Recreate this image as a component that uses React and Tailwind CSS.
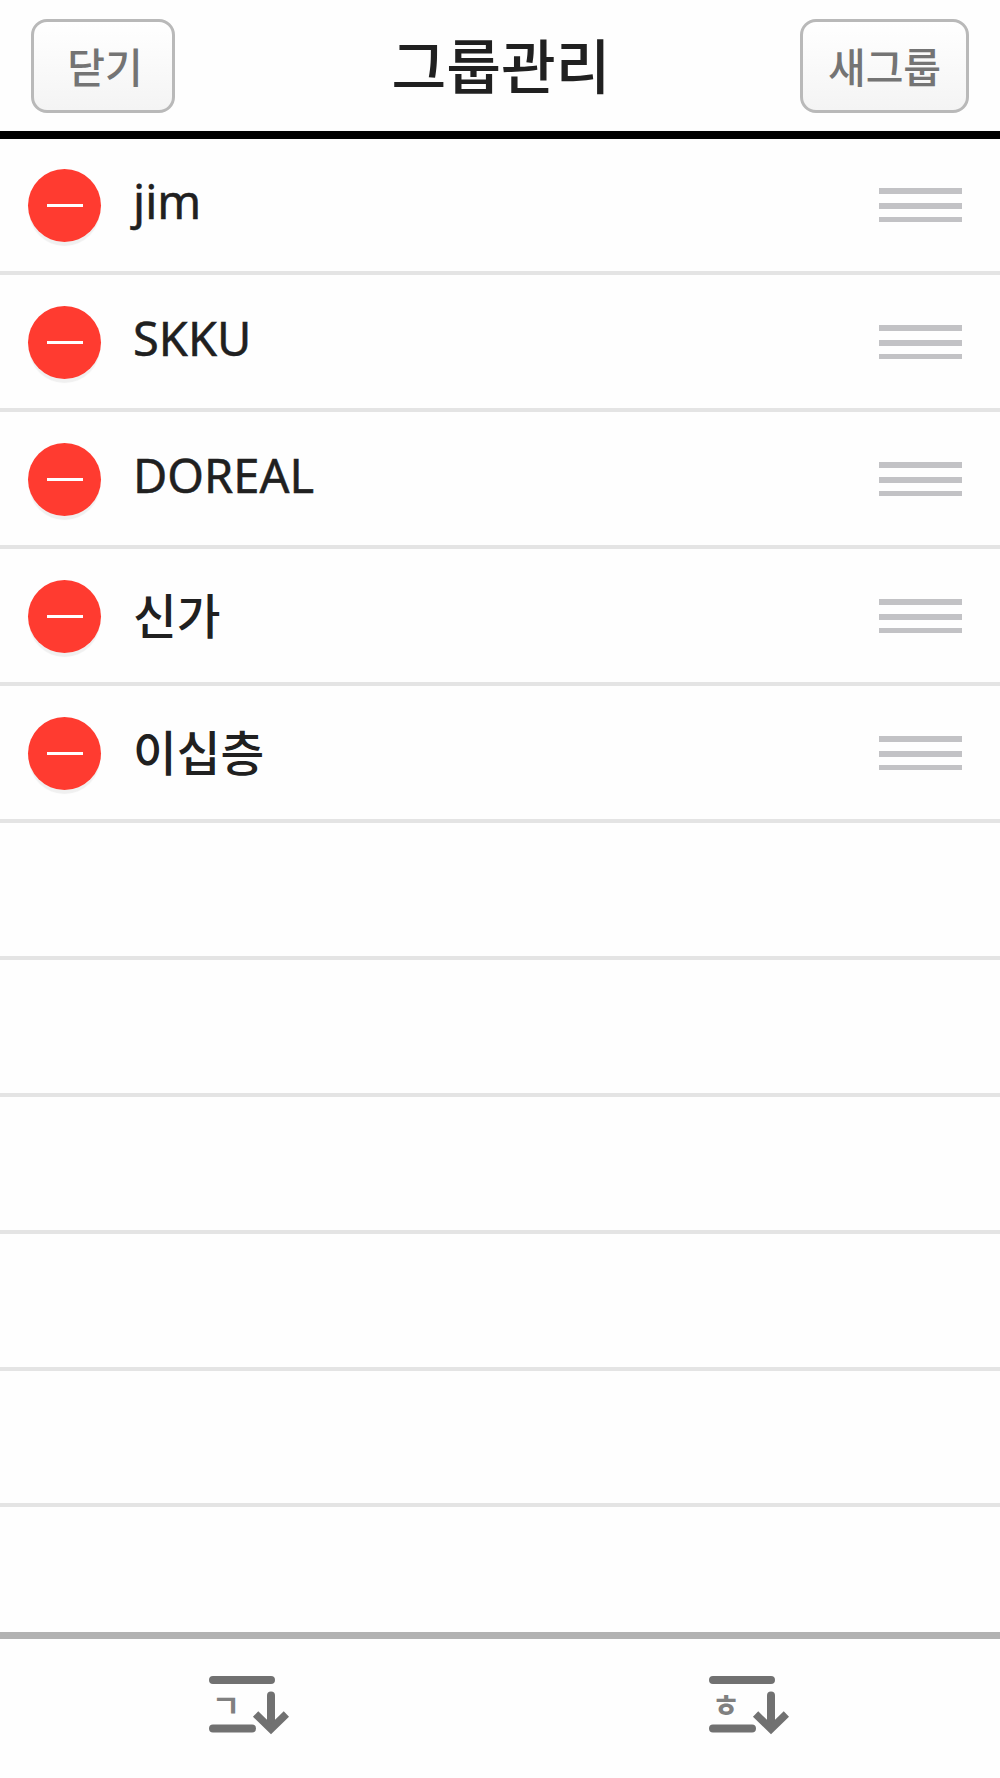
import React from 'react';

const GROUPS = ['jim', 'SKKU', 'DOREAL', '신가', '이십층'];
const EMPTY_ROWS = 5;

function HeaderButton({ children, className }) {
    return (
        <button
            className={`h-[94px] rounded-[16px] border-[3px] border-[#b9b9b9] bg-linear-to-b from-white to-[#f4f4f4] text-[41px] leading-[60px] font-medium text-[#747474] pb-[3px] ${className}`}
        >
            {children}
        </button>
    );
}

function DragHandle() {
    return (
        <div className="flex flex-col justify-between w-[83px] h-[34px] mb-5">
            <span className="h-[6px] bg-[#c2c2c5]" />
            <span className="h-[6px] bg-[#c2c2c5]" />
            <span className="h-[5px] bg-[#c2c2c5]" />
        </div>
    );
}

function GroupRow({ name }) {
    // latin names use a slightly lighter face than hangul ones
    const latin = /^[A-Za-z]/.test(name);

    return (
        <li className="flex items-end h-[137px] first:h-[136px] pl-7 pr-[38px] pb-[29px] border-b-4 border-[#e4e4e4]">
            <button className="flex items-center justify-center w-[73px] h-[73px] rounded-full bg-[#ff3b30] shadow-[0_5px_1px_-1px_#f0f0f0]">
                <span className="w-9 h-[3px] bg-white" />
            </button>
            <span
                className={
                    latin
                        ? "flex-1 ml-[32px] mb-1 h-[73px] leading-[73px] text-[47px] text-[#202020] [-webkit-text-stroke:0.5px_#202020] font-['Noto_Sans',sans-serif]"
                        : 'flex-1 ml-[32px] mb-[3px] h-[73px] leading-[73px] text-[47.5px] font-medium text-[#202020]'
                }
            >
                {name}
            </span>
            <DragHandle />
        </li>
    );
}

function SortIcon({ letter }) {
    return (
        <svg width="80" height="60" viewBox="0 0 80 60" fill="none" stroke="#717171">
            <path d="M4 4H62M4 52.5H43" strokeWidth="8" strokeLinecap="round" />
            <path d="M62 19.5V50" strokeWidth="8" strokeLinecap="round" />
            <path d="M46.6 38L62 53L77.4 38" strokeWidth="7.6" />
            <text x="17" y="40.5" textAnchor="middle" fontSize="31" fontWeight="700" fill="#808080" stroke="none">
                {letter}
            </text>
        </svg>
    );
}

export default function App() {
    return (
        <div className="flex flex-col w-[1000px] h-[1778px] overflow-hidden bg-[#fefefe] font-['Noto_Sans_CJK_KR',sans-serif]">
            <header className="grid grid-cols-[1fr_auto_1fr] items-start h-[139px] shrink-0 pt-[19px] px-[31px] border-b-8 border-black">
                <HeaderButton className="w-[144px] justify-self-start pl-[4px]">닫기</HeaderButton>
                <h1 className="pl-[2px] text-[59.5px] leading-[89px] font-medium text-[#202020]">그룹관리</h1>
                <HeaderButton className="w-[169px] justify-self-end">새그룹</HeaderButton>
            </header>

            <ul className="flex-1 min-h-0 overflow-hidden">
                {GROUPS.map((name) => (
                    <GroupRow key={name} name={name} />
                ))}
                {Array.from({ length: EMPTY_ROWS }, (_, i) => (
                    <li key={i} className="h-[137px] last:h-[136px] border-b-4 border-[#e4e4e4]" />
                ))}
            </ul>

            <footer className="grid grid-cols-2 h-[146px] shrink-0 border-t-[7px] border-[#b2b2b2]">
                <button className="flex items-start pl-[209px] pt-[37px]">
                    <SortIcon letter="ㄱ" />
                </button>
                <button className="flex items-start pl-[209px] pt-[37px]">
                    <SortIcon letter="ㅎ" />
                </button>
            </footer>
        </div>
    );
}
